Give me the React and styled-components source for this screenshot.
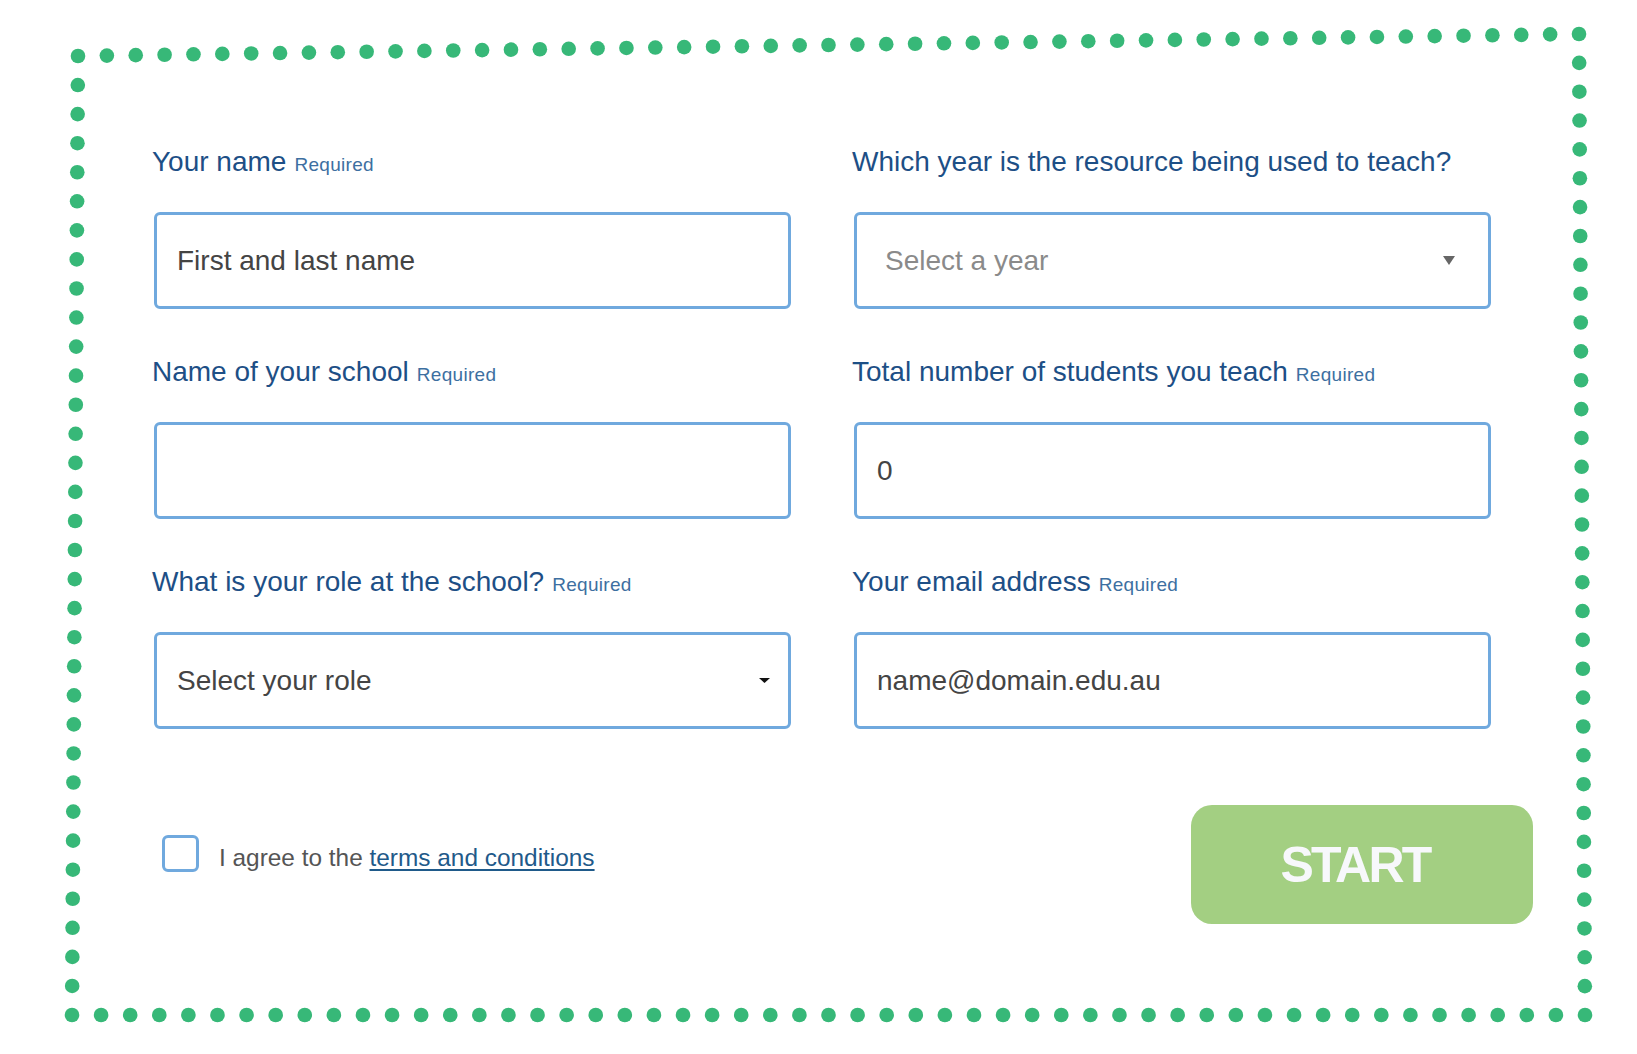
import React from 'react';
import styled, { createGlobalStyle } from 'styled-components';

const Global = createGlobalStyle`
  body {
    margin: 0;
    background: #ffffff;
    font-family: "Liberation Sans", Arial, sans-serif;
  }
`;

const Page = styled.div`
  position: relative;
  width: 1637px;
  height: 1054px;
  overflow: hidden;
  background: #ffffff;
`;

const Dots = styled.svg`
  position: absolute;
  left: 0;
  top: 0;
  width: 100%;
  height: 100%;
  pointer-events: none;
`;

const Form = styled.form`
  position: relative;
  width: 1379px;
  padding: 146px 0 0 154px;
`;

const Grid = styled.div`
  display: grid;
  grid-template-columns: 637px 637px;
  column-gap: 63px;
  row-gap: 47px;
`;

const Field = styled.div`
  display: flex;
  flex-direction: column;
  gap: 34px;
`;

const Label = styled.label`
  margin: 0 0 0 -2px;
  font-size: 28px;
  line-height: 32px;
  color: #1d4f86;
  white-space: nowrap;
`;

const Req = styled.span`
  margin-left: 8px;
  font-size: 19px;
  line-height: 1;
  letter-spacing: 0.3px;
  color: #3d6fa1;
`;

const Input = styled.input`
  box-sizing: border-box;
  width: 100%;
  height: 97px;
  margin: 0;
  padding: 0 20px;
  border: 3px solid #70a9de;
  border-radius: 6px;
  outline: none;
  background: #ffffff;
  font-family: "Liberation Sans", Arial, sans-serif;
  font-size: 28px;
  color: #444444;

  &::placeholder {
    color: #444444;
    opacity: 1;
  }
`;

const SelectBox = styled.div`
  box-sizing: border-box;
  display: flex;
  align-items: center;
  height: 97px;
  padding: 0 ${(p) => p.$padRight}px 0 ${(p) => p.$padLeft}px;
  border: 3px solid #70a9de;
  border-radius: 6px;
  font-size: 28px;
  color: ${(p) => p.$color};
  cursor: pointer;
`;

const Caret = styled.svg`
  margin-left: auto;
  flex: none;
`;

const Footer = styled.div`
  display: flex;
  align-items: flex-start;
  margin-top: 76px;
`;

const Agree = styled.label`
  display: flex;
  align-items: center;
  gap: 20px;
  margin-top: 29px;
  padding-left: 8px;
`;

const Check = styled.span`
  box-sizing: border-box;
  width: 37px;
  height: 37px;
  border: 3px solid #70a9de;
  border-radius: 6px;
  flex: none;
`;

const AgreeText = styled.span`
  margin-top: 10px;
  font-size: 24.4px;
  color: #555555;
`;

const Link = styled.a`
  color: #1f5a8a;
  text-decoration: underline;
  text-underline-offset: 3px;
  text-decoration-thickness: 1.5px;
`;

const StartButton = styled.button`
  margin-left: auto;
  width: 342px;
  height: 119px;
  padding: 0 14px 0 0;
  border: none;
  border-radius: 21px;
  background: #a3cf82;
  color: #f7f8fb;
  font-family: "Liberation Sans", Arial, sans-serif;
  font-weight: 700;
  font-size: 50px;
  letter-spacing: -2.8px;
  cursor: pointer;
`;

const corners = [
  [78, 56],
  [1579, 34],
  [1585, 1015],
  [72, 1015],
];

function dotPoints() {
  const pts = [];
  corners.forEach((a, i) => {
    const b = corners[(i + 1) % corners.length];
    const len = Math.hypot(b[0] - a[0], b[1] - a[1]);
    const n = Math.round(len / 29);
    for (let k = 0; k < n; k++) {
      pts.push([a[0] + ((b[0] - a[0]) * k) / n, a[1] + ((b[1] - a[1]) * k) / n]);
    }
  });
  return pts;
}

const DottedFrame = () => (
  <Dots viewBox="0 0 1637 1054">
    {dotPoints().map(([x, y], i) => (
      <circle key={i} cx={x} cy={y} r="7.3" fill="#37b878" />
    ))}
  </Dots>
);

const Select = ({ text, color, padLeft, padRight, caretW, caretH, caretColor }) => (
  <SelectBox $color={color} $padLeft={padLeft} $padRight={padRight}>
    {text}
    <Caret width={caretW} height={caretH} viewBox={`0 0 ${caretW} ${caretH}`}>
      <polygon points={`0,0 ${caretW},0 ${caretW / 2},${caretH}`} fill={caretColor} />
    </Caret>
  </SelectBox>
);

const App = () => (
  <Page>
    <Global />
    <DottedFrame />
    <Form onSubmit={(e) => e.preventDefault()}>
      <Grid>
        <Field>
          <Label>
            Your name<Req>Required</Req>
          </Label>
          <Input type="text" placeholder="First and last name" />
        </Field>
        <Field>
          <Label>Which year is the resource being used to teach?</Label>
          <Select
            text="Select a year"
            color="#8a8a8a"
            padLeft={28}
            padRight={33}
            caretW={12}
            caretH={9}
            caretColor="#666666"
          />
        </Field>
        <Field>
          <Label>
            Name of your school<Req>Required</Req>
          </Label>
          <Input type="text" />
        </Field>
        <Field>
          <Label>
            Total number of students you teach<Req>Required</Req>
          </Label>
          <Input type="text" defaultValue="0" />
        </Field>
        <Field>
          <Label>
            What is your role at the school?<Req>Required</Req>
          </Label>
          <Select
            text="Select your role"
            color="#444444"
            padLeft={20}
            padRight={18}
            caretW={11}
            caretH={5}
            caretColor="#111111"
          />
        </Field>
        <Field>
          <Label>
            Your email address<Req>Required</Req>
          </Label>
          <Input type="email" placeholder="name@domain.edu.au" />
        </Field>
      </Grid>
      <Footer>
        <Agree>
          <Check />
          <AgreeText>
            I agree to the <Link href="#terms">terms and conditions</Link>
          </AgreeText>
        </Agree>
        <StartButton type="submit">START</StartButton>
      </Footer>
    </Form>
  </Page>
);

export default App;
